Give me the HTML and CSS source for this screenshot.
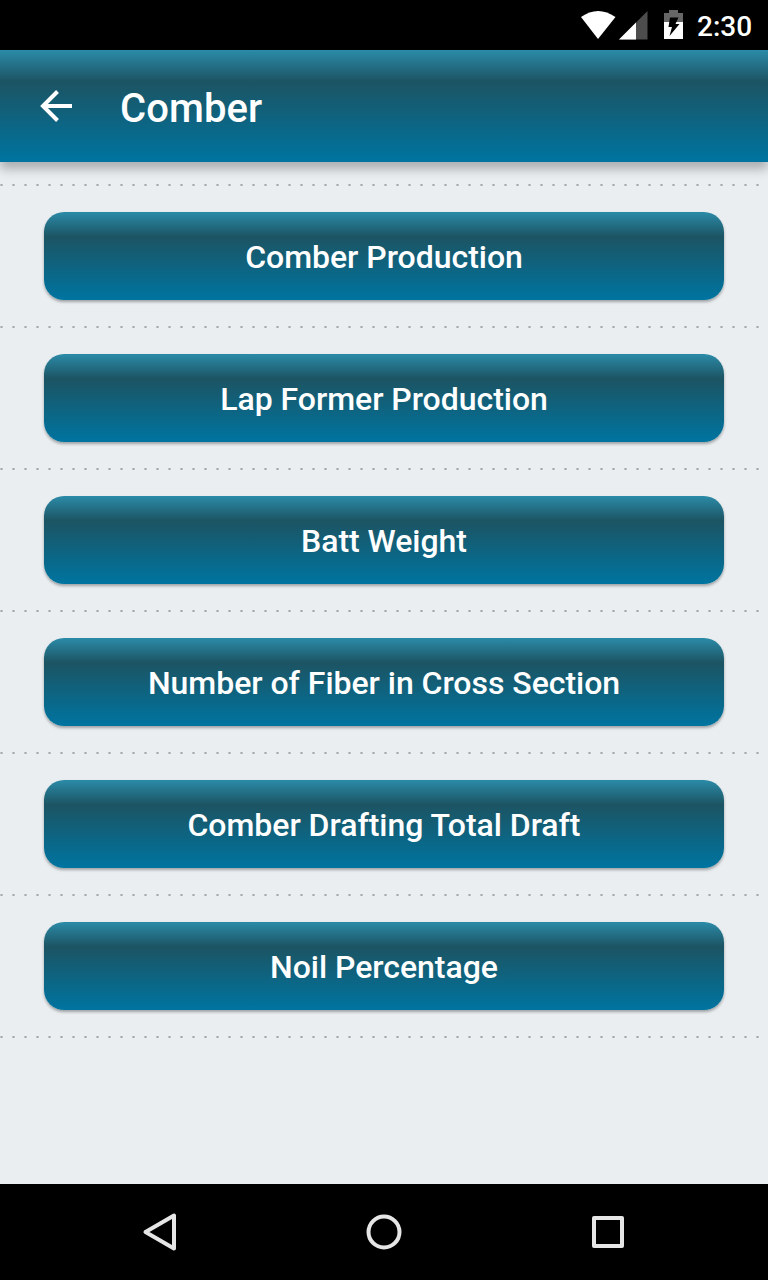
FILE: index.html
```html
<!DOCTYPE html>
<html lang="en">
<head>
<meta charset="utf-8">
<title>Comber</title>
<link rel="stylesheet" href="styles.css">
</head>
<body>
<div class="status-bar">
  <svg class="status-icons" width="110" height="50" viewBox="0 0 110 50">
    <path fill="#fff" d="M5 17Q22 5 39.500 17L22 39Z"/>
    <path fill="#4d4d4d" d="M71.500 11V39.500H43Z"/>
    <path fill="#fff" d="M60 22.500V39.500H43Z"/>
    <path fill="#666" d="M88 13h5v-3h9v3h5v9H88Z"/>
    <path fill="#fff" d="M88 22h19v17H88Z"/>
    <path fill="#000" d="M94 17.500H102.500L99.500 24H103.500L93.500 36L96 27H92.500Z"/>
  </svg>
  <span class="clock">2:30</span>
</div>
<header class="app-bar">
  <svg class="back" width="32" height="32" viewBox="0 0 32 32"><path fill="none" stroke="#fff" stroke-width="4" d="M32 16H4M17.500 1.500L3 16L17.500 30.500"/></svg>
  <h1 class="title">Comber</h1>
</header>
<main class="list">
  <div class="dots"></div>
  <button class="item">Comber Production</button>
  <div class="dots"></div>
  <button class="item">Lap Former Production</button>
  <div class="dots"></div>
  <button class="item">Batt Weight</button>
  <div class="dots"></div>
  <button class="item">Number of Fiber in Cross Section</button>
  <div class="dots"></div>
  <button class="item">Comber Drafting Total Draft</button>
  <div class="dots"></div>
  <button class="item">Noil Percentage</button>
  <div class="dots"></div>
</main>
<nav class="nav-bar">
  <svg width="40" height="40" viewBox="0 0 40 40"><path d="M5.500 20L34 3.500V36.500Z"/></svg>
  <svg width="40" height="40" viewBox="0 0 40 40"><circle cx="20" cy="20" r="15.500"/></svg>
  <svg width="40" height="40" viewBox="0 0 40 40"><rect x="6" y="6" width="28" height="28"/></svg>
</nav>
</body>
</html>
```
FILE: styles.css
```css
* { box-sizing: border-box; }
body {
  margin: 0;
  width: 768px;
  height: 1280px;
  display: flex;
  flex-direction: column;
  background: #eaeef1;
  font-family: Roboto, sans-serif;
  overflow: hidden;
}
.status-bar {
  height: 50px;
  flex: none;
  background: #000;
  color: #fff;
  display: flex;
  justify-content: flex-end;
  align-items: center;
  padding-right: 17px;
}
.status-icons { margin-right: 11px; }
.clock {
  width: 54px;
  font-size: 28px;
  font-weight: 500;
  line-height: 50px;
  padding-top: 4px;
  white-space: nowrap;
}
.app-bar {
  height: 112px;
  flex: none;
  display: flex;
  align-items: center;
  padding-left: 40px;
  gap: 48px;
  color: #fff;
  background: linear-gradient(#2b8ba8, #1c5463 28%, #00739e 97%);
  box-shadow: 0 7px 10px rgba(0, 0, 0, 0.27);
}
.title {
  margin: 4px 0 0;
  font-size: 40px;
  font-weight: 500;
  letter-spacing: 0.1px;
}
.list {
  flex: 1;
  display: flex;
  flex-direction: column;
  align-items: center;
  gap: 26px;
  padding-top: 22px;
}
.dots {
  width: 768px;
  height: 2px;
  background: repeating-linear-gradient(90deg, #c2c6c8 0 1px, #a2a6a8 1px 2px, #c2c6c8 2px 3px, transparent 3px 12px);
}
.item {
  width: 680px;
  height: 88px;
  border: 0;
  border-radius: 20px;
  padding: 1px 0 0;
  color: #fff;
  font: 500 32px Roboto, sans-serif;
  letter-spacing: -0.03px;
  background: linear-gradient(#2b8ba8, #1c5463 28%, #00739e 97%);
  box-shadow: 0 2px 3px rgba(0, 0, 0, 0.32);
}
.nav-bar {
  height: 96px;
  flex: none;
  background: #000;
  display: flex;
  align-items: center;
  justify-content: center;
  gap: 184px;
}
.nav-bar svg {
  fill: none;
  stroke: #e6e6e6;
  stroke-width: 4;
  stroke-linejoin: round;
}
```
